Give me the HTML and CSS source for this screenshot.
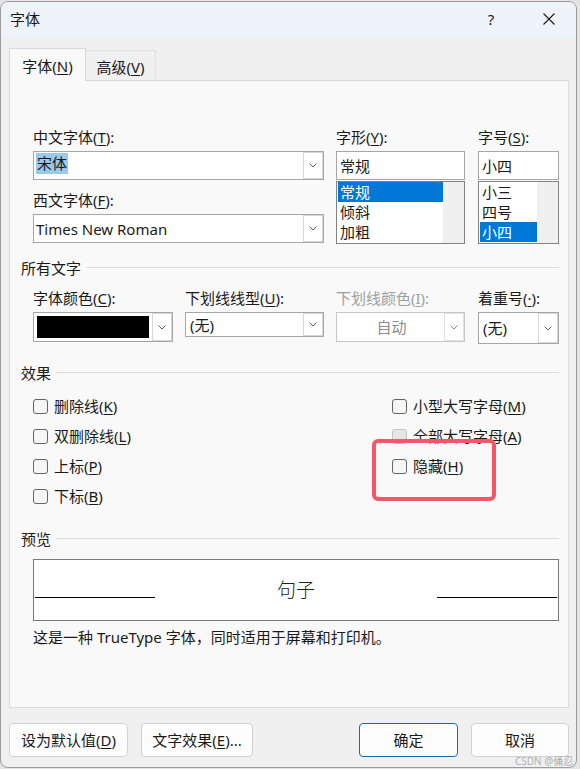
FILE: index.html
```html
<!DOCTYPE html>
<html lang="zh">
<head>
<meta charset="utf-8">
<title>字体</title>
<link rel="stylesheet" href="styles.css">
</head>
<body>
<div class="window">
  <div class="titlebar">
    <span class="title">字体</span>
    <span class="tb-btn tb-help">?</span>
    <span class="tb-btn tb-close">
      <svg width="12" height="12" viewBox="0 0 12 12"><path d="M0.5 0.5 L11.5 11.5 M11.5 0.5 L0.5 11.5" stroke="#1a1a1a" stroke-width="1.1" fill="none"/></svg>
    </span>
  </div>

  <div class="tabs">
    <div class="tab tab-active">字体(<u>N</u>)</div>
    <div class="tab tab-second">高级(<u>V</u>)</div>
  </div>

  <div class="panel">
    <div class="fontgrid">
      <div class="col col-cn">
        <div class="label">中文字体(<u>T</u>):</div>
        <div class="select sel-h29 gap4">
          <div class="val"><span class="hl">宋体</span></div>
          <div class="drop"><svg width="8" height="5" viewBox="0 0 8 5"><polyline points="0.5,0.5 4,4 7.5,0.5" fill="none" stroke="#5a5a5a" stroke-width="1"/></svg></div>
        </div>
        <div class="label gap10">西文字体(<u>F</u>):</div>
        <div class="select sel-h29 gap4">
          <div class="val">Times New Roman</div>
          <div class="drop"><svg width="8" height="5" viewBox="0 0 8 5"><polyline points="0.5,0.5 4,4 7.5,0.5" fill="none" stroke="#5a5a5a" stroke-width="1"/></svg></div>
        </div>
      </div>
      <div class="col col-style">
        <div class="label">字形(<u>Y</u>):</div>
        <div class="textbox gap4">常规</div>
        <div class="listbox">
          <div class="items">
            <div class="item item-sel">常规</div>
            <div class="item">倾斜</div>
            <div class="item">加粗</div>
          </div>
          <div class="track"></div>
        </div>
      </div>
      <div class="col col-size">
        <div class="label">字号(<u>S</u>):</div>
        <div class="textbox gap4">小四</div>
        <div class="listbox">
          <div class="items">
            <div class="item">小三</div>
            <div class="item">四号</div>
            <div class="item item-sel">小四</div>
          </div>
          <div class="track"></div>
        </div>
      </div>
    </div>

    <div class="section sec-all"><span>所有文字</span><span class="line"></span></div>

    <div class="row4">
      <div class="c4 c4-color">
        <div class="label">字体颜色(<u>C</u>):</div>
        <div class="select gap4 h30">
          <div class="swatch"></div>
          <div class="drop"><svg width="8" height="5" viewBox="0 0 8 5"><polyline points="0.5,0.5 4,4 7.5,0.5" fill="none" stroke="#5a5a5a" stroke-width="1"/></svg></div>
        </div>
      </div>
      <div class="c4 c4-utype">
        <div class="label">下划线线型(<u>U</u>):</div>
        <div class="select gap4 h25">
          <div class="val val-pad">(无)</div>
          <div class="drop"><svg width="8" height="5" viewBox="0 0 8 5"><polyline points="0.5,0.5 4,4 7.5,0.5" fill="none" stroke="#5a5a5a" stroke-width="1"/></svg></div>
        </div>
      </div>
      <div class="c4 c4-ucolor">
        <div class="label label-dis">下划线颜色(<u>I</u>):</div>
        <div class="select select-dis gap4 h30">
          <div class="val val-center">自动</div>
          <div class="drop drop-dis"><svg width="8" height="5" viewBox="0 0 8 5"><polyline points="0.5,0.5 4,4 7.5,0.5" fill="none" stroke="#8a8a8a" stroke-width="1"/></svg></div>
        </div>
      </div>
      <div class="c4 c4-emph">
        <div class="label">着重号(<u>·</u>):</div>
        <div class="select gap4 h32">
          <div class="val val-pad">(无)</div>
          <div class="drop"><svg width="8" height="5" viewBox="0 0 8 5"><polyline points="0.5,0.5 4,4 7.5,0.5" fill="none" stroke="#5a5a5a" stroke-width="1"/></svg></div>
        </div>
      </div>
    </div>

    <div class="section sec-effects"><span>效果</span><span class="line"></span></div>

    <div class="effects">
      <div class="eff-col eff-left">
        <div class="check-row"><span class="box"></span><span>删除线(<u>K</u>)</span></div>
        <div class="check-row"><span class="box"></span><span>双删除线(<u>L</u>)</span></div>
        <div class="check-row"><span class="box"></span><span>上标(<u>P</u>)</span></div>
        <div class="check-row"><span class="box"></span><span>下标(<u>B</u>)</span></div>
      </div>
      <div class="eff-col">
        <div class="check-row"><span class="box"></span><span>小型大写字母(<u>M</u>)</span></div>
        <div class="check-row"><span class="box box-dim"></span><span>全部大写字母(<u>A</u>)</span></div>
        <div class="check-row"><span class="box"></span><span>隐藏(<u>H</u>)</span></div>
      </div>
    </div>

    <div class="section sec-preview"><span>预览</span><span class="line"></span></div>

    <div class="preview">
      <div class="pline"></div>
      <div class="ptext">句子</div>
      <div class="pline"></div>
    </div>

    <div class="desc">这是一种 TrueType 字体，同时适用于屏幕和打印机。</div>

    <div class="annot"></div>
  </div>

  <div class="buttons">
    <div class="btn-group">
      <div class="btn btn-default">设为默认值(<u>D</u>)</div>
      <div class="btn btn-effects">文字效果(<u>E</u>)...</div>
    </div>
    <div class="btn-group">
      <div class="btn btn-ok">确定</div>
      <div class="btn btn-cancel">取消</div>
    </div>
  </div>

  <div class="watermark">CSDN @俑忍</div>
</div>
</body>
</html>
```

FILE: styles.css
```css
* { box-sizing: border-box; }
html, body { margin: 0; padding: 0; }
body {
  width: 580px;
  height: 769px;
  overflow: hidden;
  background: #e4e4e4;
  font-family: "Noto Sans", "Noto Sans CJK SC", sans-serif;
  font-size: 15px;
  color: #1a1a1a;
}
u { text-decoration: underline; text-decoration-thickness: 1px; text-underline-offset: 2px; }

.window {
  position: relative;
  width: 577px;
  height: 767px;
  margin-top: 1px;
  border: 1px solid #9c9c9c;
  border-radius: 8px;
  background: #f0f0f0;
  overflow: hidden;
}

.titlebar {
  height: 36px;
  background: #eef2f9;
  display: flex;
  align-items: center;
  padding-left: 9px;
}
.title { flex: 1; line-height: 20px; margin-top: -2px; }
.tb-btn {
  width: 46px;
  height: 36px;
  display: flex;
  align-items: center;
  justify-content: center;
  line-height: 20px;
}
.tb-help { margin-top: -2px; }
.tb-close { margin-left: 12px; margin-right: 4px; margin-top: -2px; }

.tabs {
  position: relative;
  z-index: 1;
  display: flex;
  align-items: flex-end;
  height: 32px;
  margin: 10px 0 0 8px;
}
.tab {
  height: 30px;
  display: flex;
  align-items: center;
  justify-content: center;
  line-height: 20px;
  padding-top: 2px;
  border: 1px solid #e0e0e0;
  border-bottom: none;
}
.tab-active {
  width: 77px;
  height: 33px;
  margin-bottom: -1px;
  background: #f9f9f9;
  border-color: #d9d9d9;
}
.tab-second {
  width: 70px;
  border-left: none;
  background: #f0f0f0;
}

.panel {
  position: relative;
  margin-left: 8px;
  width: 560px;
  height: 628px;
  border: 1px solid #dadada;
  background: #f9f9f9;
  padding: 46px 9px 0 11px;
}

.label { line-height: 20px; height: 20px; white-space: nowrap; }
.label-dis { color: #a0a0a0; }
.gap4 { margin-top: 4px; }
.gap10 { margin-top: 10px; }

.fontgrid { display: flex; margin-left: 12px; }
.col-cn { width: 291px; margin-right: 12px; }
.col-style { width: 129px; margin-right: 13px; }
.col-size { width: 81px; }

.select {
  display: flex;
  border: 1px solid #a7a7a7;
  background: #ffffff;
}
.sel-h29 { height: 29px; }
.h25 { height: 25px; }
.h30 { height: 30px; }
.h32 { height: 32px; }
.select .val {
  flex: 1;
  display: flex;
  align-items: center;
  padding-left: 2px;
  line-height: 20px;
  white-space: nowrap;
}
.select .val-pad { padding-left: 4px; }
.select .val-center { justify-content: center; color: #8c8c8c; }
.select-dis { border-color: #c6c6c6; }
.drop {
  width: 20px;
  border: 1px solid #d6d6d6;
  background: #ffffff;
  display: flex;
  align-items: center;
  justify-content: center;
}
.drop-dis { border-color: #e2e2e2; }
.hl {
  background: #99c9ef;
  line-height: 21px;
  padding: 0 1px;
  margin-top: -5px;
}
.swatch { flex: 1; margin: 3px; background: #000000; }

.textbox {
  height: 29px;
  border: 1px solid #a7a7a7;
  background: #ffffff;
  padding-left: 3px;
  display: flex;
  align-items: center;
  line-height: 20px;
}
.listbox {
  display: flex;
  height: 63px;
  margin-top: 1px;
  border: 1px solid #828282;
  background: #ffffff;
}
.items { flex: 1; padding-left: 1px; }
.item { height: 20px; line-height: 20px; padding-left: 2px; }
.item-sel { background: #0078d7; color: #ffffff; }
.track { width: 21px; background: #f0f0f0; }

.section {
  display: flex;
  align-items: center;
  height: 20px;
  line-height: 20px;
}
.section .line {
  flex: 1;
  height: 1px;
  background: #dcdcdc;
  margin-left: 5px;
  margin-top: -1px;
}
.sec-all { margin-top: 14px; }
.sec-effects { margin-top: 19px; }
.sec-preview { margin-top: 18px; }

.row4 { display: flex; align-items: flex-start; margin: 10px 0 0 12px; }
.c4-color { width: 140px; margin-right: 12px; }
.c4-utype { width: 139px; margin-right: 12px; }
.c4-ucolor { width: 129px; margin-right: 13px; }
.c4-emph { width: 81px; }

.effects { display: flex; margin: 8px 0 0 12px; }
.eff-left { width: 359px; }
.check-row {
  height: 30px;
  display: flex;
  align-items: center;
  gap: 6px;
  line-height: 20px;
}
.box {
  width: 15px;
  height: 15px;
  border: 1px solid #656565;
  border-radius: 3px;
  background: #f6f6f6;
}
.box-dim { background: #e6e6e6; border-color: #c4c4c4; }

.preview {
  margin: 10px 0 0 12px;
  width: 526px;
  height: 62px;
  border: 1px solid #7a7a7a;
  background: #ffffff;
  display: grid;
  grid-template-columns: 120px 1fr 120px;
  padding: 0 1px;
}
.pline { height: 1px; background: #000000; margin-top: 37px; }
.ptext {
  text-align: center;
  line-height: 60px;
  font-size: 19px;
  font-weight: 300;
  color: #222222;
}

.desc { margin: 6px 0 0 12px; line-height: 20px; white-space: nowrap; }

.annot {
  position: absolute;
  left: 362px;
  top: 358px;
  width: 124px;
  height: 62px;
  border: 4px solid #f7566a;
  border-radius: 6px;
}

.buttons {
  display: flex;
  justify-content: space-between;
  width: 560px;
  margin: 15px 0 0 8px;
}
.btn-group { display: flex; gap: 13px; }
.btn {
  height: 34px;
  border: 1px solid #d2d2d2;
  border-radius: 4px;
  background: #fdfdfd;
  display: flex;
  align-items: center;
  justify-content: center;
  line-height: 20px;
  white-space: nowrap;
}
.btn-default { width: 119px; }
.btn-effects { width: 112px; }
.btn-ok { width: 99px; border-color: #0f6cbd; }
.btn-cancel { width: 98px; }

.watermark {
  position: absolute;
  left: 514px;
  top: 753px;
  font-size: 10px;
  line-height: 12px;
  color: rgba(150, 150, 150, 0.75);
  white-space: nowrap;
}
```
